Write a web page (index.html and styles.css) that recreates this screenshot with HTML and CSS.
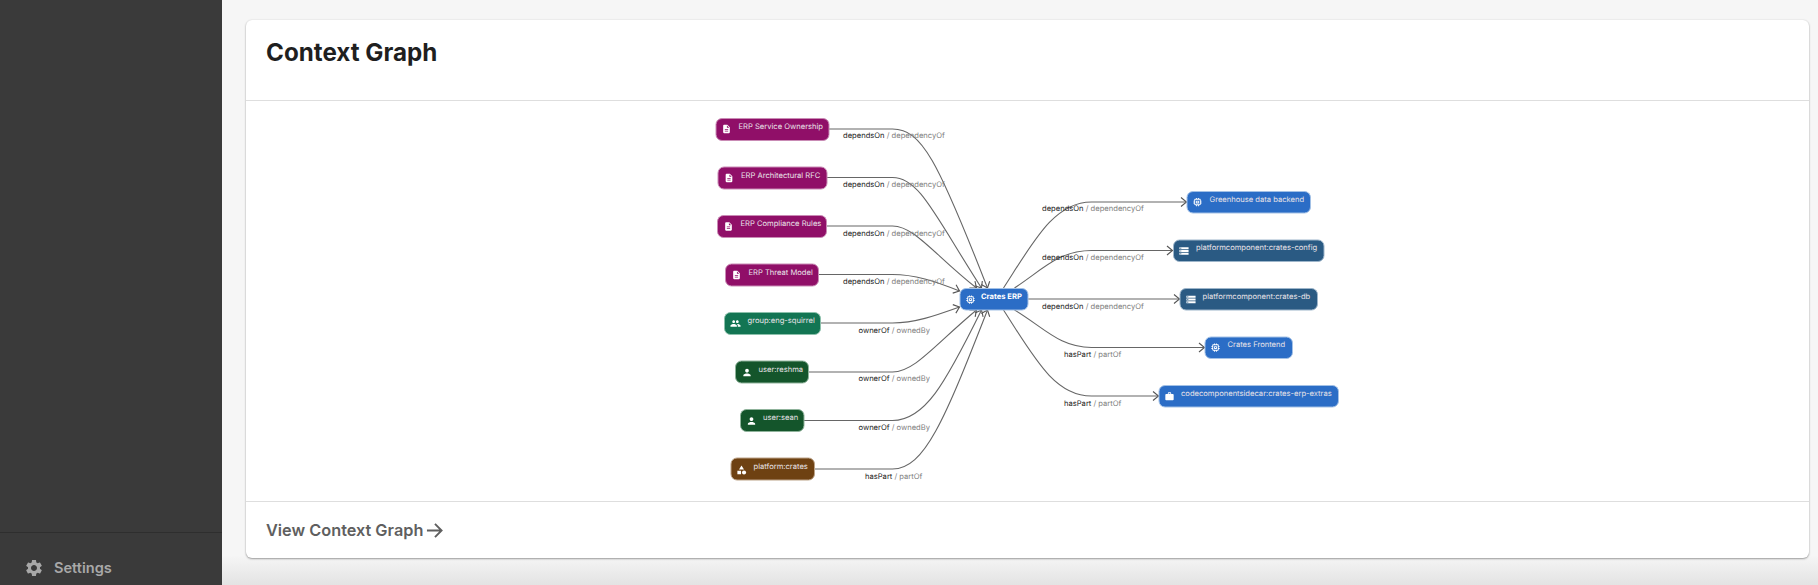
FILE: index.html
```html
<!DOCTYPE html>
<html lang="en">
<head>
    <meta charset="UTF-8">
    <title>Context Graph</title>
    <link rel="stylesheet" href="styles.css">
</head>
<body>
    <aside class="sidebar">
        <div class="sidebar-item">
            <svg class="sidebar-icon" viewBox="0 0 24 24"><path d="M19.14 12.94c.04-.3.06-.61.06-.94 0-.32-.02-.64-.07-.94l2.03-1.58c.18-.14.23-.41.12-.61l-1.92-3.32c-.12-.22-.37-.29-.59-.22l-2.39.96c-.5-.38-1.03-.7-1.62-.94l-.36-2.54c-.04-.24-.24-.41-.48-.41h-3.84c-.24 0-.43.17-.47.41l-.36 2.54c-.59.24-1.13.57-1.62.94l-2.39-.96c-.22-.08-.47 0-.59.22L2.74 8.87c-.12.21-.08.47.12.61l2.03 1.58c-.05.3-.09.63-.09.94s.02.64.07.94l-2.03 1.58c-.18.14-.23.41-.12.61l1.92 3.32c.12.22.37.29.59.22l2.39-.96c.5.38 1.03.7 1.62.94l.36 2.54c.05.24.24.41.48.41h3.84c.24 0 .44-.17.47-.41l.36-2.54c.59-.24 1.13-.56 1.62-.94l2.39.96c.22.08.47 0 .59-.22l1.92-3.32c.12-.22.07-.47-.12-.61l-2.01-1.58zM12 15.6c-1.98 0-3.6-1.62-3.6-3.6s1.62-3.6 3.6-3.6 3.6 1.62 3.6 3.6-1.62 3.6-3.6 3.6z"/></svg>
            <span>Settings</span>
        </div>
    </aside>

    <main class="main">
        <section class="card">
            <header class="card-header">
                <h1>Context Graph</h1>
            </header>

            <div class="card-graph">
                <!-- viewBox uses page coordinates so nodes read the same as the layout -->
                <svg class="graph" viewBox="247 101 1562 400">
                    <defs>
                        <marker id="arrow" markerWidth="10" markerHeight="12" refX="8" refY="6" orient="auto" markerUnits="userSpaceOnUse">
                            <path class="arrow-head" d="M2.5 1.5 L8 6 L2.5 10.5"/>
                        </marker>
                        <symbol id="i-doc" viewBox="0 0 24 24"><path d="M14 2H6c-1.1 0-1.99.9-1.99 2L4 20c0 1.1.89 2 1.99 2H18c1.1 0 2-.9 2-2V8l-6-6zm2 16H8v-2h8v2zm0-4H8v-2h8v2zm-3-5V3.5L18.5 9H13z"/></symbol>
                        <symbol id="i-group" viewBox="0 0 24 24"><path d="M16 11c1.66 0 2.99-1.34 2.99-3S17.66 5 16 5c-1.66 0-3 1.34-3 3s1.34 3 3 3zm-8 0c1.66 0 2.99-1.34 2.99-3S9.66 5 8 5C6.34 5 5 6.34 5 8s1.34 3 3 3zm0 2c-2.33 0-7 1.17-7 3.5V19h14v-2.5c0-2.33-4.67-3.5-7-3.5zm8 0c-.29 0-.62.02-.97.05 1.16.84 1.97 1.97 1.97 3.45V19h6v-2.5c0-2.33-4.67-3.5-7-3.5z"/></symbol>
                        <symbol id="i-person" viewBox="0 0 24 24"><path d="M12 12c2.21 0 4-1.79 4-4s-1.79-4-4-4-4 1.79-4 4 1.79 4 4 4zm0 2c-2.67 0-8 1.34-8 4v2h16v-2c0-2.66-5.33-4-8-4z"/></symbol>
                        <symbol id="i-category" viewBox="0 0 24 24"><path d="M12 2l-5.5 9h11L12 2z"/><circle cx="17.5" cy="17.5" r="4.5"/><path d="M3 13.5h8v8H3z"/></symbol>
                        <symbol id="i-chip" viewBox="0 0 24 24"><path d="M15 9H9v6h6V9zm-2 4h-2v-2h2v2zm8-2V9h-2V7c0-1.1-.9-2-2-2h-2V3h-2v2h-2V3H9v2H7c-1.1 0-2 .9-2 2v2H3v2h2v2H3v2h2v2c0 1.1.9 2 2 2h2v2h2v-2h2v2h2v-2h2c1.1 0 2-.9 2-2v-2h2v-2h-2v-2h2zm-4 6H7V7h10v10z"/></symbol>
                        <symbol id="i-storage" viewBox="0 0 24 24"><path d="M2 20h20v-4H2v4zm2-3h2v2H4v-2zM2 4v4h20V4H2zm4 3H4V5h2v2zm-4 7h20v-4H2v4zm2-3h2v2H4v-2z"/></symbol>
                        <symbol id="i-case" viewBox="0 0 24 24"><path d="M20 6h-4V4c0-1.11-.89-2-2-2h-4c-1.11 0-2 .89-2 2v2H4c-1.11 0-1.99.89-1.99 2L2 19c0 1.11.89 2 2 2h16c1.11 0 2-.89 2-2V8c0-1.11-.89-2-2-2zm-6 0h-4V4h4v2z"/></symbol>
                    </defs>

                    <!-- edges -->
                    <g class="edges">
                        <path d="M829 129 H893 C922 129 938 160 988 288"/>
                        <path d="M827 177.500 H893 C920 177.500 935 215 982 288"/>
                        <path d="M827 226 H893 C915 226 935 255 977 288"/>
                        <path d="M819 274.500 H893 C915 274.500 935 281 960 291"/>
                        <path d="M821 323 H893 C915 323 935 316 960 307"/>
                        <path d="M809 372 H893 C915 372 935 345 977 310"/>
                        <path d="M804 420.500 H893 C925 420.500 945 385 982 310"/>
                        <path d="M815 469 H893 C925 469 945 420 988 310"/>
                        <path d="M1004 288 C1035 240 1055 202 1092 202 H1187"/>
                        <path d="M1015 288 C1045 268 1060 250.500 1092 250.500 H1173"/>
                        <path d="M1028 299 H1180"/>
                        <path d="M1015 310 C1045 328 1060 347.500 1092 347.500 H1205"/>
                        <path d="M1004 310 C1035 358 1055 396 1092 396 H1159"/>
                    </g>

                    <!-- edge labels -->
                    <g class="labels">
                        <text x="843.500" y="138">dependsOn <tspan class="inverse">/ dependencyOf</tspan></text>
                        <text x="843.500" y="187">dependsOn <tspan class="inverse">/ dependencyOf</tspan></text>
                        <text x="843.500" y="236">dependsOn <tspan class="inverse">/ dependencyOf</tspan></text>
                        <text x="843.500" y="284">dependsOn <tspan class="inverse">/ dependencyOf</tspan></text>
                        <text x="859" y="333">ownerOf <tspan class="inverse">/ ownedBy</tspan></text>
                        <text x="859" y="381">ownerOf <tspan class="inverse">/ ownedBy</tspan></text>
                        <text x="859" y="430">ownerOf <tspan class="inverse">/ ownedBy</tspan></text>
                        <text x="865.500" y="479">hasPart <tspan class="inverse">/ partOf</tspan></text>
                        <text x="1042.500" y="211">dependsOn <tspan class="inverse">/ dependencyOf</tspan></text>
                        <text x="1042.500" y="260">dependsOn <tspan class="inverse">/ dependencyOf</tspan></text>
                        <text x="1042.500" y="309">dependsOn <tspan class="inverse">/ dependencyOf</tspan></text>
                        <text x="1064.500" y="357">hasPart <tspan class="inverse">/ partOf</tspan></text>
                        <text x="1064.500" y="406">hasPart <tspan class="inverse">/ partOf</tspan></text>
                    </g>

                    <!-- nodes -->
                    <g class="node doc">
                        <rect x="716.500" y="118.500" width="113" height="22" rx="6"/>
                        <use href="#i-doc" x="722" y="124" width="10" height="10"/>
                        <text x="739" y="128.500">ERP Service Ownership</text>
                    </g>
                    <g class="node doc">
                        <rect x="718.500" y="167" width="109" height="22" rx="6"/>
                        <use href="#i-doc" x="724.500" y="173" width="10" height="10"/>
                        <text x="741.500" y="177.500">ERP Architectural RFC</text>
                    </g>
                    <g class="node doc">
                        <rect x="718" y="215.500" width="109" height="22" rx="6"/>
                        <use href="#i-doc" x="724" y="221.500" width="10" height="10"/>
                        <text x="741" y="225.500">ERP Compliance Rules</text>
                    </g>
                    <g class="node doc">
                        <rect x="726" y="264" width="93" height="22" rx="6"/>
                        <use href="#i-doc" x="732" y="270" width="10" height="10"/>
                        <text x="749" y="274.500">ERP Threat Model</text>
                    </g>
                    <g class="node team">
                        <rect x="725" y="312.500" width="96" height="22" rx="6"/>
                        <use href="#i-group" x="730.500" y="318" width="11" height="11"/>
                        <text x="748" y="323">group:eng-squirrel</text>
                    </g>
                    <g class="node user">
                        <rect x="736" y="361" width="73" height="22" rx="6"/>
                        <use href="#i-person" x="742" y="367" width="11" height="11"/>
                        <text x="759" y="371.500">user:reshma</text>
                    </g>
                    <g class="node user">
                        <rect x="741" y="409.500" width="63.500" height="22" rx="6"/>
                        <use href="#i-person" x="746.500" y="415.500" width="11" height="11"/>
                        <text x="763.500" y="420">user:sean</text>
                    </g>
                    <g class="node platform">
                        <rect x="731.500" y="458" width="83.500" height="22" rx="6"/>
                        <use href="#i-category" x="736.500" y="464.500" width="11" height="11"/>
                        <text x="754" y="468.500">platform:crates</text>
                    </g>
                    <g class="node service main-node">
                        <rect x="960.500" y="288.500" width="68" height="21.500" rx="6"/>
                        <use href="#i-chip" x="965.500" y="294" width="11" height="11"/>
                        <text x="981.500" y="299">Crates ERP</text>
                    </g>
                    <g class="node service">
                        <rect x="1187.500" y="191.500" width="123.500" height="21.500" rx="6"/>
                        <use href="#i-chip" x="1192.500" y="196.500" width="11" height="11"/>
                        <text x="1210" y="201.500">Greenhouse data backend</text>
                    </g>
                    <g class="node component">
                        <rect x="1174" y="240" width="150.500" height="21.500" rx="6"/>
                        <use href="#i-storage" x="1179" y="245.500" width="11" height="11"/>
                        <text x="1196.500" y="250">platformcomponent:crates-config</text>
                    </g>
                    <g class="node component">
                        <rect x="1180.500" y="288.500" width="137.500" height="21.500" rx="6"/>
                        <use href="#i-storage" x="1186" y="294" width="11" height="11"/>
                        <text x="1203" y="298.500">platformcomponent:crates-db</text>
                    </g>
                    <g class="node service">
                        <rect x="1205.500" y="337" width="87.500" height="21.500" rx="6"/>
                        <use href="#i-chip" x="1210.500" y="342" width="11" height="11"/>
                        <text x="1228" y="347">Crates Frontend</text>
                    </g>
                    <g class="node service">
                        <rect x="1159.500" y="385.500" width="179.500" height="21.500" rx="6"/>
                        <use href="#i-case" x="1165" y="391.500" width="10" height="10"/>
                        <text x="1181.500" y="395.500">codecomponentsidecar:crates-erp-extras</text>
                    </g>
                </svg>
            </div>

            <footer class="card-footer">
                <span>View Context Graph</span>
                <svg class="footer-arrow" viewBox="0 0 18 18"><path d="M1 9 H16 M9.500 2 L16.500 9 L9.500 16"/></svg>
            </footer>
        </section>
    </main>
</body>
</html>
```

FILE: styles.css
```css
html, body {
    margin: 0;
    height: 100%;
}
body {
    display: flex;
    height: 585px;
    overflow: hidden;
    font-family: Inter, 'Noto Sans', sans-serif;
    color: #1f1f1f;
}
.sidebar {
    width: 222px;
    flex-shrink: 0;
    display: flex;
    flex-direction: column;
    justify-content: flex-end;
    background-color: #3a3a3a;
}
.sidebar-item {
    height: 53px;
    box-sizing: border-box;
    padding: 25px 0 0 24px;
    display: flex;
    align-items: center;
    align-self: stretch;
    gap: 10px;
    border-top: 1px solid #2e2e2e;
    color: #a8a8a8;
    font-size: 14.600px;
    font-weight: 600;
    line-height: 20px;
}
.sidebar-item span {
    margin-bottom: 8px;
}
.sidebar-icon {
    width: 20px;
    height: 20px;
    margin-bottom: 8px;
    fill: #a8a8a8;
}
.main {
    flex: 1;
    box-sizing: border-box;
    padding: 20px 9px 27px 24px;
    background: linear-gradient(to top, #e3e3e3, #f6f6f6 30px);
}
.card {
    height: 100%;
    display: flex;
    flex-direction: column;
    background-color: white;
    border-radius: 6px;
    box-shadow: 0 1px 2px rgba(0,0,0,0.35), 0 0 2px rgba(0,0,0,0.1);
}
.card-header {
    height: 81px;
    box-sizing: border-box;
    padding: 17px 20px 0;
    border-bottom: 1px solid #dedede;
}
h1 {
    margin: 0;
    font-size: 24.200px;
    font-weight: 700;
    line-height: 20px;
    padding-top: 6px;
}
.card-graph {
    height: 400px;
}
.graph {
    display: block;
    width: 100%;
    height: 400px;
    text-rendering: geometricPrecision;
}
.edges path {
    fill: none;
    stroke: #666;
    stroke-width: 1.1;
    marker-end: url(#arrow);
}
.arrow-head {
    fill: none;
    stroke: #555;
    stroke-width: 1.1;
}
.labels text {
    font-size: 7.600px;
    font-weight: 400;
    fill: #222;
}
.labels .inverse {
    font-weight: 400;
    fill: #808080;
}
.node text {
    font-size: 7.600px;
    fill: #e9e3e8;
}
.node use {
    fill: white;
}
.node rect {
    stroke-width: 1;
}
.doc rect {
    fill: #900f68;
    stroke: #c98bb5;
}
.team rect {
    fill: #137553;
    stroke: #8bc0ab;
}
.user rect {
    fill: #14552b;
    stroke: #8fb39b;
}
.platform rect {
    fill: #6e4112;
    stroke: #bca388;
}
.service rect {
    fill: #2b6dc6;
    stroke: #a3c1e6;
}
.component rect {
    fill: #2a5a83;
    stroke: #9db5ca;
}
.main-node text {
    font-weight: 700;
    fill: white;
}
.card-footer {
    flex: 1;
    display: flex;
    align-items: center;
    gap: 3px;
    padding-left: 20px;
    border-top: 1px solid #dedede;
    color: #5f5f5f;
    font-size: 16.300px;
    font-weight: 600;
}
.footer-arrow {
    width: 17px;
    height: 17px;
    fill: none;
    stroke: #5f5f5f;
    stroke-width: 2;
}
```
